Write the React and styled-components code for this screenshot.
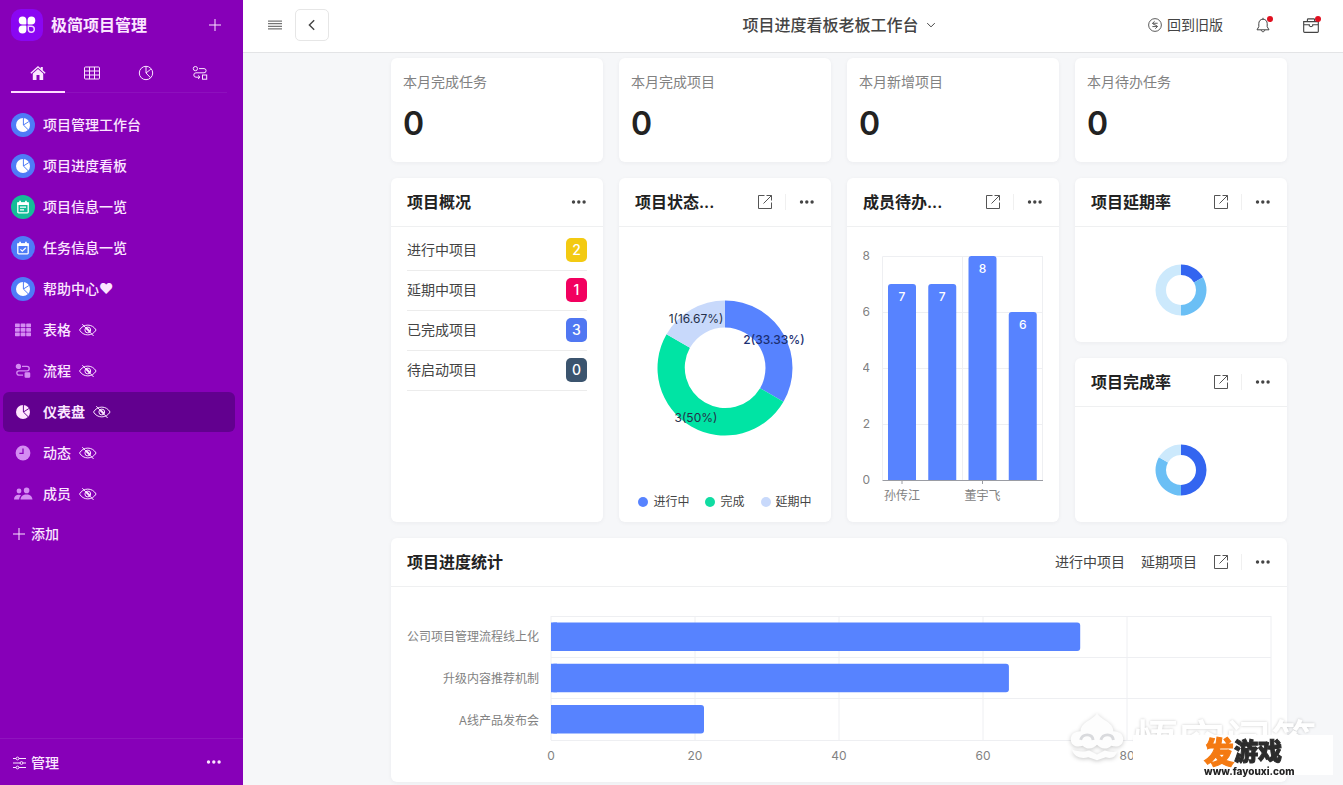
import React from "react";
import styled, { createGlobalStyle } from "styled-components";

const GlobalStyle = createGlobalStyle`
  *, *::before, *::after { box-sizing: border-box; }
  html, body, #root { height: 100%; }
  body {
    margin: 0;
    overflow: hidden;
    background: #f6f7f9;
    color: #444;
    font-family: Inter, "Noto Sans CJK SC", sans-serif;
    font-size: 14px;
    line-height: 20px;
  }
  button {
    font: inherit;
    color: inherit;
    background: none;
    border: 0;
    padding: 0;
    cursor: pointer;
  }
  a { color: inherit; text-decoration: none; }
  ul { list-style: none; margin: 0; padding: 0; }
  h1, h2, h3, p { margin: 0; font-size: inherit; font-weight: inherit; }
  svg { display: block; flex: none; }
`;

/* ---------- shell ---------- */

const Shell = styled.div`
  display: grid;
  grid-template-columns: 243px minmax(0, 1fr);
  height: 100vh;
  overflow: hidden;
`;

const Sidebar = styled.aside`
  display: flex;
  flex-direction: column;
  min-height: 0;
  background: #8700b8;
  color: #fbe6ff;
`;

const Brand = styled.div`
  display: flex;
  align-items: center;
  gap: 8px;
  height: 49px;
  padding: 0 20px 0 11px;
`;

const BrandLogo = styled.span`
  display: grid;
  place-items: center;
  width: 32px;
  height: 32px;
  border-radius: 10px;
  background: #8a06f2;
`;

const BrandName = styled.h1`
  flex: 1;
  font-size: 16px;
  font-weight: 700;
  line-height: 24px;
`;

const IconButton = styled.button`
  display: grid;
  place-items: center;
`;

const TabBar = styled.nav`
  display: flex;
  margin: 0 16px 12px 11px;
  height: 44px;
  border-bottom: 1px solid #8d10bd;
`;

const Tab = styled.button`
  display: grid;
  place-items: center;
  width: 54px;
  height: 44px;
  padding-top: 6px;
  border-bottom: 2px solid ${(p) => (p.$active ? "#ffdcff" : "transparent")};
`;

const NavList = styled.ul`
  flex: 1;
  display: flex;
  flex-direction: column;
  gap: 1px;
  padding: 0 8px 0 3px;
`;

const NavLink = styled.a`
  display: flex;
  align-items: center;
  gap: 8px;
  height: 40px;
  padding-left: 8px;
  border-radius: 6px;
  font-weight: ${(p) => (p.$active ? 700 : 500)};
  background: ${(p) => (p.$active ? "#62008f" : "transparent")};
`;

const NavIcon = styled.span`
  display: grid;
  place-items: center;
  width: 24px;
  height: 24px;
  border-radius: 50%;
  color: ${(p) => p.$color || "#fff"};
  background: ${(p) => p.$bg || "transparent"};
`;

const AddButton = styled.button`
  display: flex;
  align-items: center;
  gap: 4px;
  height: 38px;
  padding-left: 8px;
  font-weight: 500;
`;

const SidebarFooter = styled.div`
  display: flex;
  align-items: center;
  justify-content: space-between;
  height: 47px;
  padding: 1px 21px 0 13px;
  border-top: 1px solid #8f14be;
`;

const ManageButton = styled.button`
  display: flex;
  align-items: center;
  gap: 5px;
  font-weight: 500;
`;

const Main = styled.main`
  display: flex;
  flex-direction: column;
  min-width: 0;
  min-height: 0;
`;

/* ---------- top bar ---------- */

const TopBar = styled.header`
  display: grid;
  grid-template-columns: 148px minmax(0, 1fr) 56px;
  align-items: center;
  flex: none;
  height: 53px;
  padding-bottom: 2px;
  background: #fff;
  border-bottom: 1px solid #e3e4e6;
`;

const TopLeft = styled.div`
  display: flex;
  align-items: center;
  gap: 13px;
  padding-left: 25px;
`;

const BackButton = styled.button`
  display: grid;
  place-items: center;
  width: 34px;
  height: 32px;
  border: 1px solid #e6e6e6;
  border-radius: 5px;
`;

const BoardSwitch = styled.button`
  grid-column: 2;
  grid-row: 1;
  justify-self: center;
  display: flex;
  align-items: center;
  gap: 7px;
  font-size: 16px;
  font-weight: 500;
  line-height: 24px;
  color: #444;
`;

const TopRight = styled.div`
  grid-column: 2 / 4;
  grid-row: 1;
  justify-self: end;
  display: flex;
  align-items: center;
  padding-right: 22px;
  color: #444;
`;

const OldVersion = styled.a`
  display: flex;
  align-items: center;
  gap: 5px;
  margin-right: 30px;
`;

const AlertButton = styled.button`
  position: relative;
  display: grid;
  place-items: center;
  width: 20px;
  height: 20px;
  margin-left: ${(p) => p.$gap || 0}px;
  &::after {
    content: "";
    position: absolute;
    top: 1px;
    right: 0;
    width: 6px;
    height: 6px;
    border-radius: 50%;
    background: #e01020;
  }
`;

/* ---------- dashboard ---------- */

const Board = styled.div`
  flex: 1;
  display: grid;
  grid-template-columns: repeat(4, minmax(0, 1fr));
  grid-template-rows: 104px 164px 164px 244px;
  gap: 16px;
  padding: 5px 56px 16px 148px;
`;

const Card = styled.section`
  display: flex;
  flex-direction: column;
  min-width: 0;
  background: #fff;
  border-radius: 6px;
  box-shadow: 0 1px 4px rgba(30, 40, 60, 0.05);
  grid-row: span ${(p) => p.$rows || 1};
  grid-column: span ${(p) => p.$cols || 1};
`;

const Stat = styled(Card)`
  padding: 14px 12px;
  gap: 12px;
`;

const StatLabel = styled.p`
  color: #828282;
`;

const StatValue = styled.p`
  font-size: 32px;
  font-weight: 600;
  line-height: 40px;
  color: #222;
`;

const CardHead = styled.div`
  display: flex;
  align-items: center;
  flex: none;
  height: 49px;
  padding: 0 16px;
  border-bottom: 1px solid #eff0f1;
`;

const CardTitle = styled.h2`
  flex: 1;
  min-width: 0;
  font-size: 16px;
  font-weight: 600;
  line-height: 24px;
  color: #222;
  white-space: nowrap;
`;

const HeadLink = styled.a`
  margin-right: 16px;
  color: #444;
`;

const Divider = styled.span`
  width: 1px;
  height: 16px;
  margin: 0 13px 0 12px;
  background: #f0f0f0;
`;

const CardBody = styled.div`
  flex: 1;
  display: flex;
  flex-direction: column;
  align-items: center;
  justify-content: center;
  min-height: 0;
  padding-top: ${(p) => p.$top || 0}px;
`;

const SummaryTable = styled.table`
  width: auto;
  margin: 3px 16px 0;
  border-collapse: collapse;
  td, th {
    height: 40px;
    padding: 0;
    border-bottom: 1px solid #ececec;
    font-weight: 400;
    text-align: left;
  }
  td { width: 21px; }
`;

const Count = styled.span`
  display: grid;
  place-items: center;
  width: 21px;
  height: 24px;
  border-radius: 5px;
  color: #fff;
  font-weight: 500;
  background: ${(p) => p.$bg};
`;

const Legend = styled.ul`
  display: flex;
  justify-content: center;
  gap: 16px;
  padding-bottom: 10px;
  font-size: 12px;
`;

const LegendItem = styled.li`
  display: flex;
  align-items: center;
  gap: 5px;
  &::before {
    content: "";
    width: 10px;
    height: 10px;
    border-radius: 50%;
    background: ${(p) => p.$color};
  }
`;

const ProgressBody = styled.div`
  display: flex;
  gap: 12px;
  padding: 29px 16px 0;
`;

const ProgressLabels = styled.ul`
  display: grid;
  grid-template-rows: repeat(3, 1fr);
  width: 132px;
  height: 126px;
  align-items: center;
  text-align: right;
  font-size: 12px;
  color: #828282;
  white-space: nowrap;
`;

const PlotArea = styled.div`
  flex: 1;
  min-width: 0;
  svg { overflow: visible; }
`;

/* ---------- watermark ---------- */

const Watermark = styled.div`
  position: fixed;
  right: 10px;
  bottom: 10px;
  width: 264px;
  height: 64px;
  pointer-events: none;
`;

const WatermarkBrand = styled.div`
  display: flex;
  align-items: flex-start;
  gap: 8px;
  color: #fff;
  font-size: 46px;
  font-weight: 500;
  line-height: 60px;
  white-space: nowrap;
  text-shadow: 0 0 3px rgba(0, 0, 0, 0.22);
`;

const WatermarkLogo = styled.svg`
  filter: drop-shadow(0 1px 2px rgba(0, 0, 0, 0.22));
`;

const SiteBadge = styled.div`
  position: absolute;
  right: 0;
  bottom: 0;
  width: 200px;
  height: 40px;
  padding: 2px 0 0 71px;
  background: #fff;
`;

const SiteName = styled.p`
  display: flex;
  align-items: center;
  height: 30px;
  color: #2c2c2c;
  font-size: 24px;
  font-weight: 900;
  line-height: 30px;
  -webkit-text-stroke: 1px currentColor;
  b {
    color: #f47a12;
    font-size: 30px;
    font-weight: 900;
  }
`;

const SiteUrl = styled.p`
  font-size: 10px;
  font-weight: 800;
  line-height: 8px;
  color: #222;
`;

/* ---------- icons ---------- */

const Line = ({ size = 16, w = 1, children, ...rest }) => (
  <svg width={size} height={size} viewBox="0 0 16 16" fill="none" stroke="currentColor" strokeWidth={w} aria-hidden="true" {...rest}>
    {children}
  </svg>
);

const Plus = ({ size = 16 }) => <Line size={size}><path d="M8 2v12M2 8h12" /></Line>;

const Logo = () => (
  <svg width="20" height="20" viewBox="0 0 20 20" aria-hidden="true">
    <g fill="#fff">
      <path d="M5.6 1.6A3.8 3.8 0 0 1 9.4 5.4v3.1q0 .9-.9.9H5.6a3.9 3.9 0 0 1 0-7.8z" />
      <path d="M14.4 1.6a3.9 3.9 0 0 1 0 7.8h-2.9q-.9 0-.9-.9V5.4a3.8 3.8 0 0 1 3.8-3.8z" />
      <path d="M5.6 10.6h2.9q.9 0 .9.9v2.9a3.9 3.9 0 1 1-3.8-3.8z" />
    </g>
    <path d="M11.3 11.3h3a3 3 0 1 1-3 3z" fill="none" stroke="#f3d8ff" strokeWidth="1.4" />
  </svg>
);

const Home = () => (
  <svg width="16" height="16" viewBox="0 0 16 16" aria-hidden="true">
    <path d="M.4 7.8 8 1l2.7 2.4V1.9h2.1v3.4l2.8 2.5-.9 1L8 2.8 1.3 8.8z" fill="currentColor" />
    <path d="M2.8 8.5 8 3.9l5.2 4.6V15H9.5v-5h-3v5H2.8z" fill="currentColor" />
  </svg>
);

const TableLine = () => (
  <Line><rect x=".5" y="2" width="15" height="12" rx="1" /><path d="M.5 6h15M.5 10h15M5.5 2v12M10.5 2v12" /></Line>
);

const PieLine = () => (
  <Line><circle cx="8" cy="8" r="6.7" /><path d="M8 1.3V8l4.600 4.800M8 8l4.800-3.800" /></Line>
);

const FlowLine = () => (
  <Line><circle cx="3.4" cy="3.6" r="2.1" /><rect x="10.5" y="10" width="4.2" height="4.2" /><path d="M7 3.6h5a2 2 0 0 1 0 4.200H4a2.200 2.200 0 0 0 0 4.400h3.600M6 10.400l2 1.800-2 1.800" /></Line>
);

const FlowSolid = () => (
  <Line w={1.3}><circle cx="3.4" cy="3.4" r="2" fill="currentColor" /><rect x="10.2" y="10" width="4.4" height="4.2" rx=".6" fill="currentColor" /><path d="M7 3.4h5a2.200 2.200 0 0 1 0 4.400H4a2.200 2.200 0 0 0 0 4.400h4" /></Line>
);

const PieSolid = ({ cut = "#4f7bf7" }) => (
  <svg width="16" height="16" viewBox="0 0 16 16" aria-hidden="true">
    <circle cx="8" cy="8" r="7" fill="currentColor" />
    <path d="M8.4 1v7l4.600 4.600M8.400 8l5.400-3.400" fill="none" stroke={cut} strokeWidth="1" />
  </svg>
);

const Calendar = ({ check }) => (
  <svg width="14" height="14" viewBox="0 0 14 14" aria-hidden="true">
    <path d="M1.2 5V2.300h2V.8h1.700v1.500h4.200V.8h1.700v1.500h2V5z" fill="currentColor" />
    <rect x="1.8" y="3.2" width="10.4" height="9.6" rx=".8" fill="none" stroke="currentColor" strokeWidth="1.3" />
    <path d={check ? "M4.4 8.4 6.3 10.2 9.8 6.8" : "M4 7.2h6M4 9.8h4"} fill="none" stroke="currentColor" strokeWidth="1.2" />
  </svg>
);

const TableSolid = () => (
  <svg width="16" height="16" viewBox="0 0 16 16" fill="currentColor" aria-hidden="true">
    {[1.5, 6, 10.5].map((y) => [0, 5.6, 11.2].map((x) => <rect key={`${x}-${y}`} x={x} y={y} width="4.8" height="3.7" rx=".6" />))}
  </svg>
);

const Clock = () => (
  <svg width="16" height="16" viewBox="0 0 16 16" aria-hidden="true">
    <circle cx="8" cy="8" r="7.4" fill="currentColor" />
    <path d="M8 3.600v4.800H4.400" fill="none" stroke="#8700b8" strokeWidth="1.3" />
  </svg>
);

const People = () => (
  <svg width="20" height="16" viewBox="0 0 20 16" fill="currentColor" aria-hidden="true">
    <circle cx="6" cy="5" r="2.4" /><circle cx="13.6" cy="4.4" r="2.8" />
    <path d="M1 13.600c0-3.200 2-4.800 4.800-4.800 1 0 1.700.2 2.300.6-1.300 1-1.900 2.500-2 4.200zM7.500 13.600c.2-3.300 2.600-5.200 6-5.200s5.800 1.900 6 5.200z" />
  </svg>
);

const EyeOff = () => (
  <svg width="18" height="14" viewBox="0 0 18 14" fill="none" stroke="currentColor" aria-label="已隐藏" role="img">
    <path d="M.5 7C2.400 3.900 5.300 2.100 8.800 2.100S15.200 3.900 17.100 7C15.200 10.100 12.300 11.900 8.800 11.900S2.400 10.100.5 7z" />
    <circle cx="8.800" cy="7" r="2.900" />
    <path d="M3.300 1.200 14.600 13" />
    <path d="m7.300 5 3.600 3.800" strokeWidth="2" />
  </svg>
);

const Sliders = () => (
  <svg width="13" height="14" viewBox="0 0 13 14" fill="none" stroke="currentColor" aria-hidden="true">
    <path d="M0 2.500h3M6 2.500h7M0 7h7M10 7h3M0 11.500h3M6 11.500h7" />
    <circle cx="4.500" cy="2.500" r="1.400" /><circle cx="8.500" cy="7" r="1.400" /><circle cx="4.500" cy="11.500" r="1.400" />
  </svg>
);

const Dots = () => (
  <svg width="16" height="5" viewBox="0 0 16 5" fill="currentColor" aria-hidden="true">
    <circle cx="2.500" cy="2" r="1.700" /><circle cx="7.800" cy="2" r="1.700" /><circle cx="13.100" cy="2" r="1.700" />
  </svg>
);

const Burger = () => (
  <svg width="14" height="10" viewBox="0 0 14 10" stroke="#555" aria-hidden="true">
    <path d="M0 1.100h14M0 3.700h14M0 6.300h14M0 8.900h14" />
  </svg>
);

const OpenIcon = () => (
  <Line stroke="#555"><path d="M7.500 1.500h-6v13h13v-6M9.500 1.500h5v5M14.500 1.500 6.500 9.500" /></Line>
);

const Bell = () => (
  <Line><path d="M8 2.200c-2.700 0-4.200 2-4.200 4.500v3L2 12.800h12l-1.800-3.100v-3C12.200 4.200 10.700 2.200 8 2.200zM8 2.200V.8M6.300 13c0 2.300 3.400 2.300 3.400 0" /></Line>
);

const Briefcase = () => (
  <Line size={18}><path d="M1.500 5h13v8.700q0 .8-.8.800H2.300q-.8 0-.8-.8zM4.800 5V3.300q0-.8.8-.8h4.800q.8 0 .8.800V5M1.500 7.800h5v1q1.500 1.200 3 0v-1h5" /></Line>
);

const Swap = () => (
  <Line size={14}><circle cx="8" cy="8" r="7.300" /><path d="M11 6H5.200l2.400-2.300M5 9.800h5.800l-2.400 2.400M5.200 6c0 2 5.600 1.800 5.600 3.800" /></Line>
);

/* ---------- charts ---------- */

const arc = (cx, cy, ro, ri, from, to) => {
  const pt = (r, f) => {
    const a = f * 2 * Math.PI - Math.PI / 2;
    return `${(cx + r * Math.cos(a)).toFixed(2)} ${(cy + r * Math.sin(a)).toFixed(2)}`;
  };
  const large = to - from > 0.5 ? 1 : 0;
  return `M${pt(ro, from)}A${ro} ${ro} 0 ${large} 1 ${pt(ro, to)}L${pt(ri, to)}A${ri} ${ri} 0 ${large} 0 ${pt(ri, from)}Z`;
};

const Ring = ({ cx, cy, outer, inner, parts }) => {
  let start = 0;
  return parts.map(([share, color]) => {
    const d = arc(cx, cy, outer, inner, start, start + share);
    start += share;
    return <path key={color} d={d} fill={color} />;
  });
};

const SmallRing = ({ parts, label }) => (
  <svg width="52" height="52" viewBox="0 0 52 52" role="img" aria-label={label}>
    <Ring cx={26} cy={26} outer={25.5} inner={15} parts={parts} />
  </svg>
);

const StatusRing = () => (
  <svg width="180" height="140" viewBox="0 0 180 140" role="img" aria-label="项目状态">
    <Ring cx={90} cy={70} outer={67.5} inner={40.5} parts={[[1 / 3, "#5783ff"], [0.5, "#00e4a4"], [1 / 6, "#c8d9fb"]]} />
    <g fontSize="12" fill="#24304a" textAnchor="middle">
      <text x="61" y="25">1(16.67%)</text>
      <text x="139" y="46" fontWeight="500" fill="#1c2f72">2(33.33%)</text>
      <text x="61" y="124">3(50%)</text>
    </g>
  </svg>
);

const members = [
  { value: 7, name: "孙传江" },
  { value: 7 },
  { value: 8, name: "董宇飞" },
  { value: 6 },
];

const MemberChart = () => (
  <svg width="180" height="270" viewBox="0 0 180 270" role="img" aria-label="成员待办任务">
    <g stroke="#eeeff2">
      {[0, 2, 4, 6].map((i) => <path key={i} d={`M19.500 ${12.5 + i * 28}H180`} />)}
      {[19.5, 99.5, 179.5].map((x) => <path key={x} d={`M${x} 12.500V236`} />)}
    </g>
    <g fontSize="12" fill="#828282" textAnchor="end">
      {[0, 2, 4, 6, 8].map((v) => <text key={v} x="7" y={240 - v * 28}>{v}</text>)}
    </g>
    {members.map(({ value, name }, i) => {
      const x = 25 + i * 40.25;
      const top = 236 - value * 28;
      return (
        <g key={i} textAnchor="middle">
          <path d={`M${x} 236V${top + 3}q0-3 3-3h22q3 0 3 3V236z`} fill="#5783ff" />
          <text x={x + 14} y={top + 17} fontSize="12" fontWeight="500" fill="#fff">{value}</text>
          {name && <path d={`M${x + 14} 236v4`} stroke="#9a9ca3" />}
          {name && <text x={x + 14} y="256" fontSize="12" fill="#828282">{name}</text>}
        </g>
      );
    })}
    <path d="M19.500 236.500H180" stroke="#9a9ca3" />
  </svg>
);

const progress = [
  { name: "公司项目管理流程线上化", value: 73.5 },
  { name: "升级内容推荐机制", value: 63.6 },
  { name: "A线产品发布会", value: 21.25 },
];

const ProgressChart = () => (
  <ProgressBody>
    <ProgressLabels>
      {progress.map((p) => <li key={p.name}>{p.name}</li>)}
    </ProgressLabels>
    <PlotArea>
      <svg width="100%" height="150" role="img" aria-label="项目进度">
        <g stroke="#eeeff2">
          {[0.5, 41.5, 82.5, 124.5].map((y) => <line key={y} x1="0" x2="100%" y1={y} y2={y} />)}
          {[0, 20, 40, 60, 80, 100].map((v) => <line key={v} x1={`${v}%`} x2={`${v}%`} y1="0" y2="124" />)}
        </g>
        {progress.map((p, i) => (
          <g key={p.name} fill="#5783ff">
            <rect x="0" y={6.5 + i * 41.25} width={`${p.value}%`} height="28.500" rx="3" />
            <rect x="0" y={6.5 + i * 41.25} width="6" height="28.500" />
          </g>
        ))}
        <g fontSize="12" fill="#828282" textAnchor="middle">
          {[0, 20, 40, 60, 80].map((v) => <text key={v} x={`${v}%`} y="144">{v}</text>)}
        </g>
      </svg>
    </PlotArea>
  </ProgressBody>
);

/* ---------- page ---------- */

const Head = ({ title, links = [], open = true }) => (
  <CardHead>
    <CardTitle>{title}</CardTitle>
    {links.map((l) => <HeadLink href="#" key={l}>{l}</HeadLink>)}
    {open && <IconButton aria-label="打开"><OpenIcon /></IconButton>}
    {open && <Divider />}
    <IconButton aria-label="更多"><Dots /></IconButton>
  </CardHead>
);

const blue = "#4f7bf7";
const lilac = "#d48cf2";

const navItems = [
  { label: "项目管理工作台", icon: <PieSolid />, bg: blue },
  { label: "项目进度看板", icon: <PieSolid />, bg: blue },
  { label: "项目信息一览", icon: <Calendar />, bg: "#14bd98" },
  { label: "任务信息一览", icon: <Calendar check />, bg: blue },
  { label: "帮助中心❤", icon: <PieSolid />, bg: blue },
  { label: "表格", icon: <TableSolid />, color: lilac, hidden: true },
  { label: "流程", icon: <FlowSolid />, color: lilac, hidden: true },
  { label: "仪表盘", icon: <PieSolid cut="#62008f" />, color: "#ffe6ff", hidden: true, active: true },
  { label: "动态", icon: <Clock />, color: lilac, hidden: true },
  { label: "成员", icon: <People />, color: lilac, hidden: true },
];

const stats = ["本月完成任务", "本月完成项目", "本月新增项目", "本月待办任务"];

const summary = [
  ["进行中项目", 2, "#f3ca12"],
  ["延期中项目", 1, "#f2005f"],
  ["已完成项目", 3, "#5077f2"],
  ["待启动项目", 0, "#3b546e"],
];

export default function App() {
  return (
    <>
      <GlobalStyle />
      <Shell>
        <Sidebar>
          <Brand>
            <BrandLogo><Logo /></BrandLogo>
            <BrandName>极简项目管理</BrandName>
            <IconButton aria-label="新建"><Plus /></IconButton>
          </Brand>
          <TabBar>
            <Tab $active aria-label="首页"><Home /></Tab>
            <Tab aria-label="表格"><TableLine /></Tab>
            <Tab aria-label="仪表盘"><PieLine /></Tab>
            <Tab aria-label="流程"><FlowLine /></Tab>
          </TabBar>
          <NavList>
            {navItems.map((n) => (
              <li key={n.label}>
                <NavLink href="#" $active={n.active}>
                  <NavIcon $bg={n.bg} $color={n.color}>{n.icon}</NavIcon>
                  {n.label}
                  {n.hidden && <EyeOff />}
                </NavLink>
              </li>
            ))}
            <li><AddButton><Plus />添加</AddButton></li>
          </NavList>
          <SidebarFooter>
            <ManageButton><Sliders />管理</ManageButton>
            <IconButton aria-label="更多"><Dots /></IconButton>
          </SidebarFooter>
        </Sidebar>

        <Main>
          <TopBar>
            <TopLeft>
              <IconButton aria-label="菜单"><Burger /></IconButton>
              <BackButton aria-label="返回"><Line size={14} w={1.6} stroke="#444"><path d="M10.500 2.500 5 8l5.500 5.500" /></Line></BackButton>
            </TopLeft>
            <BoardSwitch aria-haspopup="menu">
              项目进度看板老板工作台
              <Line size={10} w={1.6}><path d="M2 5l6 6 6-6" /></Line>
            </BoardSwitch>
            <TopRight>
              <OldVersion href="#"><Swap />回到旧版</OldVersion>
              <AlertButton aria-label="通知"><Bell /></AlertButton>
              <AlertButton aria-label="工具箱" $gap={28}><Briefcase /></AlertButton>
            </TopRight>
          </TopBar>

          <Board>
            {stats.map((s) => (
              <Stat key={s}>
                <StatLabel>{s}</StatLabel>
                <StatValue>0</StatValue>
              </Stat>
            ))}

            <Card $rows={2}>
              <Head title="项目概况" open={false} />
              <SummaryTable>
                <tbody>
                  {summary.map(([name, count, color]) => (
                    <tr key={name}>
                      <th scope="row">{name}</th>
                      <td><Count $bg={color}>{count}</Count></td>
                    </tr>
                  ))}
                </tbody>
              </SummaryTable>
            </Card>

            <Card $rows={2}>
              <Head title="项目状态..." />
              <CardBody $top={16}><StatusRing /></CardBody>
              <Legend>
                <LegendItem $color="#5783ff">进行中</LegendItem>
                <LegendItem $color="#10dca2">完成</LegendItem>
                <LegendItem $color="#c8d9fb">延期中</LegendItem>
              </Legend>
            </Card>

            <Card $rows={2}>
              <Head title="成员待办..." />
              <CardBody $top={8}><MemberChart /></CardBody>
            </Card>

            <Card>
              <Head title="项目延期率" />
              <CardBody $top={10}>
                <SmallRing label="项目延期率" parts={[[1 / 6, "#3365f0"], [1 / 3, "#6bbff5"], [0.5, "#cce9fc"]]} />
              </CardBody>
            </Card>

            <Card>
              <Head title="项目完成率" />
              <CardBody $top={10}>
                <SmallRing label="项目完成率" parts={[[0.5, "#3365f0"], [1 / 3, "#6bbff5"], [1 / 6, "#cce9fc"]]} />
              </CardBody>
            </Card>

            <Card $cols={4}>
              <Head title="项目进度统计" links={["进行中项目", "延期项目"]} />
              <ProgressChart />
            </Card>
          </Board>
        </Main>
      </Shell>

      <Watermark>
        <WatermarkBrand>
          <WatermarkLogo width="56" height="54" viewBox="0 0 58 56" aria-hidden="true">
            <path d="M29 2c3 7 17 9 17 19 8 0 11 5 10 10-1 5-6 7-12 5-6 5-11 3-15-1-4 4-9 6-15 1-6 2-11 0-12-5-1-5 2-10 10-10C12 11 26 9 29 2z" fill="#fdfdfd" />
            <path d="M3 40c8 3 14 2 18 1l8 4 8-4c4 1 8 2 13 1-2 6-6 8-12 6l-9 3-9-3c-7 2-15 0-17-8z" fill="#fdfdfd" />
            <path d="M12 30c2-7 12-7 13 0M33 30c2-7 12-7 13 0" fill="none" stroke="#d9dadd" strokeWidth="3" />
          </WatermarkLogo>
          悟空问答
        </WatermarkBrand>
        <SiteBadge>
          <SiteName><b>发</b>游戏</SiteName>
          <SiteUrl>www.fayouxi.com</SiteUrl>
        </SiteBadge>
      </Watermark>
    </>
  );
}
